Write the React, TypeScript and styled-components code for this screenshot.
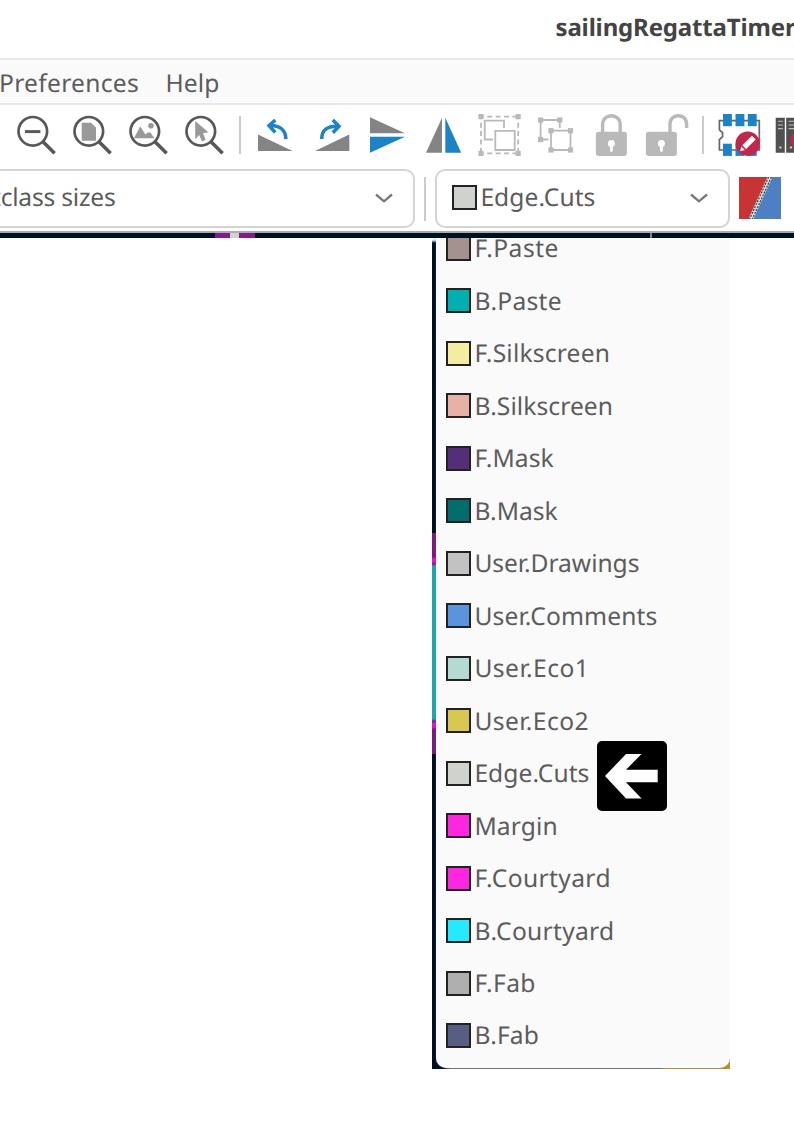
import React, { useLayoutEffect, useRef, useState } from "react";
import styled, { createGlobalStyle } from "styled-components";

const Global = createGlobalStyle`
  *, *::before, *::after { box-sizing: border-box; }
  html, body { margin: 0; padding: 0; background: #fff; overflow: hidden; }
  body {
    font-family: "Noto Sans", "Open Sans", sans-serif;
    font-size: 24.6px;
    color: #5c5c5c;
    text-rendering: geometricPrecision;
  }
`;

const Page = styled.div`
  width: 794px;
  height: 1123px;
  overflow: hidden;
  display: flex;
  flex-direction: column;
  background: #fff;
`;

const TitleBar = styled.header`
  flex: none;
  height: 60px;
  padding: 0 0 5px 555.5px;
  display: flex;
  align-items: center;
  border-bottom: 2px solid #e8e8e8;
  font-weight: 700;
  font-size: 24px;
  color: #444;
`;

const MenuBar = styled.nav`
  flex: none;
  height: 45px;
  display: flex;
  align-items: center;
  gap: 26.5px;
  margin-left: -1px;
  padding-top: 3px;
  background: #fafafa;
  border-bottom: 2px solid #e8e8e8;
`;

const Toolbar = styled.div`
  flex: none;
  height: 63px;
  display: flex;
  margin-left: -48px;
`;

const Tool = styled.svg`
  flex: none;
  width: 56px;
  height: 62px;
  display: block;
`;

const ToolDivider = styled.div<{ $w: number }>`
  flex: none;
  width: ${(p) => p.$w}px;
  display: flex;
  justify-content: center;
  padding: 11px 0 14px;
  &::before {
    content: "";
    width: 2px;
    background: #cbcbcb;
  }
`;

const SelectRow = styled.div`
  flex: none;
  height: 63px;
  padding-top: 0.5px;
  display: flex;
  align-items: flex-start;
`;

const Select = styled.div<{ $w: number; $pad: number; $open?: boolean }>`
  flex: none;
  width: ${(p) => p.$w}px;
  height: 59px;
  padding: 0 19px 2px ${(p) => p.$pad}px;
  display: flex;
  align-items: center;
  border: 2px solid #d4d4d4;
  border-left-width: ${(p) => (p.$open ? 0 : 2)}px;
  border-radius: ${(p) => (p.$open ? "0 10px 10px 0" : "10px")};
  background: #fff;
`;

const Chevron = styled.svg`
  width: 20px;
  height: 12px;
  margin: 2px 0 0 auto;
`;

const RowDivider = styled.div`
  width: 2px;
  height: 44px;
  margin: 8px 9px 0 9px;
  background: #cbcbcb;
`;

const PairIcon = styled.svg`
  flex: none;
  width: 42px;
  height: 42px;
  margin: 8px 0 0 9px;
`;

const CanvasEdge = styled.div`
  flex: none;
  height: 7px;
  display: flex;
  border-top: 2px solid #a9abad;
  background: #001023;
`;

const EdgeMark = styled.i<{ $w: number; $gap?: number; $c: string }>`
  flex: none;
  width: ${(p) => p.$w}px;
  margin-left: ${(p) => p.$gap ?? 0}px;
  background: ${(p) => p.$c};
`;

const Popup = styled.div`
  flex: none;
  width: 298px;
  height: 831px;
  margin-left: 432px;
  display: flex;
  overflow: hidden;
  background: linear-gradient(90deg, #001023 0 12px, #6d747f 18px 229px, #b79325 233px);
`;

const Traces = styled.div`
  flex: none;
  width: 4px;
  background: linear-gradient(
    180deg,
    #eef0f1 0 2px,
    #001023 5px 295.5px,
    #7d1a80 295.5px 319px,
    #e414c4 321px 324px,
    #7d1a80 326px,
    #1fa5ae 328px 481px,
    #7d1a80 483px,
    #e414c4 486px 489px,
    #7d1a80 491px 516px,
    #001023 516px
  );
`;

const List = styled.ul`
  flex: 1;
  height: 830px;
  margin: 0;
  padding: 0 0 0 10px;
  list-style: none;
  overflow: hidden;
  background: #fafafa;
  border-radius: 0 0 10px 10px;
  box-shadow: 0 0 1px #7b828c;
  &::before {
    content: "";
    display: block;
    margin-top: -15.8px;
  }
`;

const Item = styled.li`
  position: relative;
  height: 52.47px;
  display: flex;
  align-items: center;
`;

const Swatch = styled.span<{ $c: string }>`
  flex: none;
  width: 25px;
  height: 25px;
  margin-right: 3.4px;
  border: 2px solid #222;
  background: ${(p) => p.$c};
`;

const Pointer = styled.svg`
  position: absolute;
  left: 151px;
  top: -6px;
  width: 70px;
  height: 70px;
`;

const Label = styled.span<{ $shift?: number }>`
  flex: none;
  white-space: pre;
  line-height: 30px;
  padding-top: 2px;
  margin-left: ${(p) => p.$shift ?? 0}px;
`;

// Text whose tracking is adjusted so that it takes the given width.
function FitText({ text, width, shift }: { text: string; width: number; shift?: number }) {
  const ref = useRef<HTMLSpanElement>(null);
  const [tracking, setTracking] = useState(0);
  useLayoutEffect(() => {
    if (ref.current) {
      const natural = ref.current.getBoundingClientRect().width;
      setTracking((width - natural) / text.length);
    }
  }, [text, width]);
  return (
    <Label ref={ref} $shift={shift} style={{ letterSpacing: `${tracking}px` }}>
      {text}
    </Label>
  );
}

const GREY = "#848484";
const BLUE = "#1c83c6";
const OFF = "#b9b9b9";

function Zoom({ children }: { children?: React.ReactNode }) {
  return (
    <Tool viewBox="0 0 56 62">
      {children}
      <circle cx="24.8" cy="26.3" r="14.3" fill="none" stroke="#585858" strokeWidth="2.7" />
      <path d="M35 36.8 46.6 48.2" stroke="#585858" strokeWidth="3.6" />
    </Tool>
  );
}

function Nodes({ points }: { points: [number, number][] }) {
  return (
    <>
      {points.map(([x, y]) => (
        <rect key={`${x}-${y}`} x={x - 2.6} y={y - 2.6} width="5.2" height="5.2" fill={OFF} />
      ))}
    </>
  );
}

function Padlock({ x, shackle }: { x: number; shackle: string }) {
  return (
    <Tool viewBox="0 0 56 62">
      <path d={shackle} fill="none" stroke={OFF} strokeWidth="3.4" />
      <rect x={x} y="26.7" width="31" height="24.3" rx="3" fill={OFF} />
      <circle cx={x + 15.5} cy="38.5" r="3.5" fill="#fff" />
      <path d={`M${x + 15.5} 39V45.5`} stroke="#fff" strokeWidth="2.8" strokeLinecap="round" />
    </Tool>
  );
}

function EditBadge({ cx, cy }: { cx: number; cy: number }) {
  return (
    <g transform={`translate(${cx} ${cy})`}>
      <circle r="12.2" fill="#c3264a" />
      <path d="M-7.6 7.6-6.4 2.8-2.8 6.4z" fill="#fff" />
      <path d="M-5.4 1.6 4.2-8 8-4.2-1.6 5.4z" fill="#fff" />
    </g>
  );
}

const Down = () => (
  <Chevron viewBox="0 0 20 12">
    <path d="M2 2.5 10 9.3 18 2.5" fill="none" stroke="#777" strokeWidth="2.3" />
  </Chevron>
);

const layers: { name: string; color: string; width: number; pointed?: boolean }[] = [
  { name: "F.Paste", color: "#a3928d", width: 84.5 },
  { name: "B.Paste", color: "#00b0b0", width: 87.5 },
  { name: "F.Silkscreen", color: "#f3eca1", width: 135.7 },
  { name: "B.Silkscreen", color: "#e8b1a7", width: 138.7 },
  { name: "F.Mask", color: "#552e79", width: 79.3 },
  { name: "B.Mask", color: "#036c6d", width: 83.3 },
  { name: "User.Drawings", color: "#c2c2c2", width: 165 },
  { name: "User.Comments", color: "#5994dc", width: 183 },
  { name: "User.Eco1", color: "#b4dbd2", width: 115 },
  { name: "User.Eco2", color: "#d8c852", width: 114.5 },
  { name: "Edge.Cuts", color: "#d0d2cd", width: 115, pointed: true },
  { name: "Margin", color: "#ff26e2", width: 83.5 },
  { name: "F.Courtyard", color: "#ff26e2", width: 136.5 },
  { name: "B.Courtyard", color: "#26e9ff", width: 140 },
  { name: "F.Fab", color: "#afafaf", width: 61.5 },
  { name: "B.Fab", color: "#585d84", width: 64.5 },
];

export default function App() {
  return (
    <>
      <Global />
      <Page>
        <TitleBar>
          <FitText text="sailingRegattaTimer" width={240} />
        </TitleBar>
        <MenuBar>
          <FitText text="Preferences" width={140} />
          <FitText text="Help" width={54} />
        </MenuBar>
        <Toolbar>
          <Zoom />
          <Zoom>
            <path d="M17 26.6H32.4" stroke="#585858" strokeWidth="3" />
          </Zoom>
          <Zoom>
            <path d="M17.7 17.7H27L32 22.5V35.7H17.7z" fill="#999" />
          </Zoom>
          <Zoom>
            <path d="M14 33.3 20.3 21.3 25.3 29.6 27.6 27.4H30.4L34.5 33.3z" fill="#999" />
            <circle cx="31" cy="20.7" r="2.8" fill="#999" />
          </Zoom>
          <Zoom>
            <path d="M19.2 16 32.4 27.2 27 28.3 29.6 34.8 26 36.6 23.2 30 19.2 34.2z" fill="#999" />
          </Zoom>
          <ToolDivider $w={15} />
          <Tool viewBox="0 0 56 62">
            <path d="M11 29.5V46H45.5z" fill={GREY} />
            <path
              d="M38.8 34C38.8 25.5 33.5 20.3 22.5 20.6M28.3 15 22 20.6 28.3 27.5"
              fill="none"
              stroke={BLUE}
              strokeWidth="3.5"
            />
          </Tool>
          <Tool viewBox="0 0 56 62">
            <path d="M46.3 29.5V46H12z" fill={GREY} />
            <path
              d="M18.7 34C18.7 25.5 24 20.6 35.3 21.2M29.8 15 36 21.2 29.8 27.8"
              fill="none"
              stroke={BLUE}
              strokeWidth="3.5"
            />
          </Tool>
          <Tool viewBox="0 0 56 62">
            <path d="M11 12.3V28.3H46z" fill={GREY} />
            <path d="M11 31.7H46L11 47.7z" fill={BLUE} />
          </Tool>
          <Tool viewBox="0 0 56 62">
            <path d="M27 12.8V47.7H11z" fill={GREY} />
            <path d="M30.3 12.8V47.7H46.2z" fill={BLUE} />
          </Tool>
          <Tool viewBox="0 0 56 62">
            <g fill="none" stroke={OFF} strokeWidth="1.8">
              <path d="M10 11.7H47.2M10 48.3H47.2" strokeDasharray="5 3.4" strokeDashoffset="-6.2" />
              <path d="M10 11.7V48.3M47.2 11.7V48.3" strokeDasharray="5 3.4" strokeDashoffset="-6" />
              <path d="M33 23V15.7H13.7V34.5H22" />
              <path d="M24.3 25.8H43.7V45H24.3z" />
            </g>
            <Nodes points={[[10, 11.6], [47.1, 11.6], [10, 48.4], [47.1, 48.4]]} />
          </Tool>
          <Tool viewBox="0 0 56 62">
            <g fill="none" stroke={OFF} strokeWidth="1.8">
              <path d="M32.8 23V15H13.6V34.5H21.5" />
              <path d="M24 25.7H43.5V45H24z" />
            </g>
            <Nodes
              points={[[13.6, 15], [32.8, 15], [13.6, 34.5], [24, 25.7], [43.5, 25.7], [24, 45], [43.5, 45]]}
            />
          </Tool>
          <Padlock x={12.9} shackle="M19.6 28V19.6C19.6 7.8 37.2 7.8 37.2 19.6V28" />
          <Padlock x={6.9} shackle="M31 28V19C31 8 47.6 8 47.6 19V23" />
          <ToolDivider $w={16} />
          <Tool viewBox="0 0 56 62">
            <path
              d="M8.4 25V15.7H48.3V45H8.4V34.6L11.6 31.6V27.6L8.4 25"
              fill="none"
              stroke="#666"
              strokeWidth="1.7"
            />
            {[12, 24.5, 36.8].map((x) => (
              <g key={x} fill={BLUE}>
                <rect x={x} y="9" width="8.9" height="12.2" />
                <rect x={x} y="38.7" width="8.9" height="12.2" />
              </g>
            ))}
            <EditBadge cx={36.7} cy={38.7} />
          </Tool>
          <Tool viewBox="0 0 56 62">
            <path d="M8.7 12.7H17.8V47.7H8.7zM19.2 12.7H28.5V47.7H19.2z" fill="#505050" />
            <path
              d="M11 16.3H15.8M11 20H15.8M11 23.6H15.8M21.6 16.3H27M21.6 20H27M21.6 23.6H27"
              stroke="#bbb"
              strokeWidth="1.1"
            />
            <path d="M12.2 42.5H14.5M22.8 42.5H25" stroke="#ccc" strokeWidth="2" />
            <EditBadge cx={36} cy={35.5} />
          </Tool>
        </Toolbar>
        <SelectRow>
          <Select $w={415} $pad={0} $open>
            <FitText text="tclass sizes" width={123.5} shift={-8} />
            <Down />
          </Select>
          <RowDivider />
          <Select $w={295} $pad={15}>
            <Swatch $c="#d0d2cd" />
            <FitText text="Edge.Cuts" width={115} />
            <Down />
          </Select>
          <PairIcon viewBox="0 0 42 42">
            <rect width="42" height="42" fill="#4d7fc4" />
            <path d="M0 0H29L9 42H0z" fill="#c83434" />
            <path d="M31 0 12 42" stroke="#ddd" strokeWidth="4.6" />
            <path d="M29.6 0 10.6 42M32.4 0 13.4 42" stroke="#444" strokeWidth="1.3" strokeDasharray="2 1.2" />
          </PairIcon>
        </SelectRow>
        <CanvasEdge>
          <EdgeMark $gap={214.5} $w={15.5} $c="#841a84" />
          <EdgeMark $w={9} $c="#d0d2cd" />
          <EdgeMark $w={16} $c="#841a84" />
          <EdgeMark $gap={395} $w={1.5} $c="#7c838b" />
        </CanvasEdge>
        <Popup>
          <Traces />
          <List>
            {layers.map((layer) => (
              <Item key={layer.name}>
                <Swatch $c={layer.color} />
                <FitText text={layer.name} width={layer.width} />
                {layer.pointed && (
                  <Pointer viewBox="0 0 70 70">
                    <rect width="70" height="70" rx="5" fill="#000" />
                    <path d="M8 35 29 13H44.5L29 28.8H60.7V41.2H29L44.5 57.5H29z" fill="#fff" />
                  </Pointer>
                )}
              </Item>
            ))}
          </List>
        </Popup>
      </Page>
    </>
  );
}
